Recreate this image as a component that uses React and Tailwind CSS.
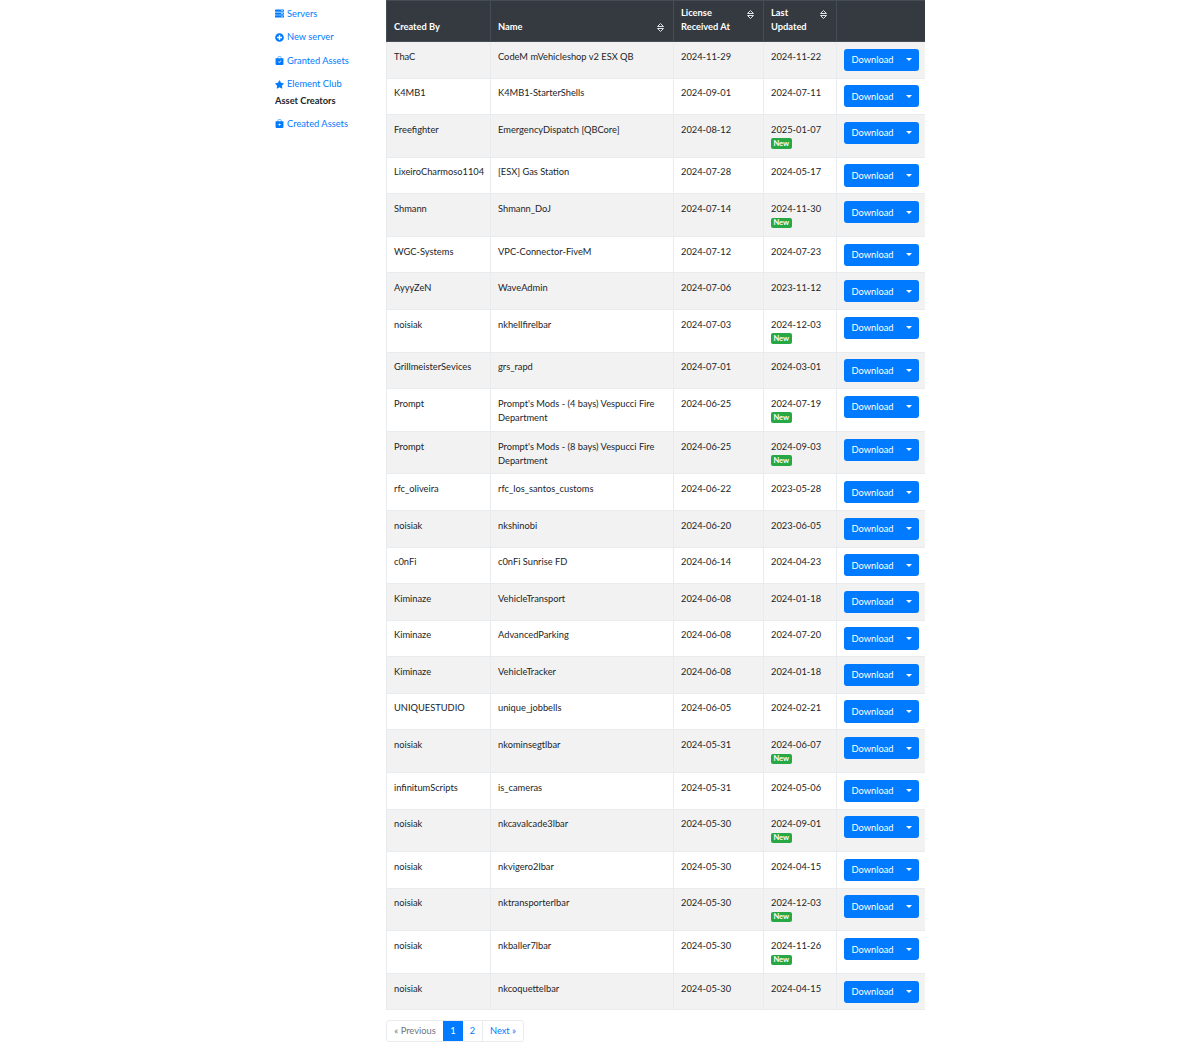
import React from 'react';
import { FaServer, FaPlusCircle, FaStar } from 'react-icons/fa';
import { BsBagCheckFill, BsBagPlusFill } from 'react-icons/bs';

const rows = [
    ['ThaC', 'CodeM mVehicleshop v2 ESX QB', '2024-11-29', '2024-11-22', false],
    ['K4MB1', 'K4MB1-StarterShells', '2024-09-01', '2024-07-11', false],
    ['Freefighter', 'EmergencyDispatch [QBCore]', '2024-08-12', '2025-01-07', true],
    ['LixeiroCharmoso1104', '[ESX] Gas Station', '2024-07-28', '2024-05-17', false],
    ['Shmann', 'Shmann_DoJ', '2024-07-14', '2024-11-30', true],
    ['WGC-Systems', 'VPC-Connector-FiveM', '2024-07-12', '2024-07-23', false],
    ['AyyyZeN', 'WaveAdmin', '2024-07-06', '2023-11-12', false],
    ['noisiak', 'nkhellfirelbar', '2024-07-03', '2024-12-03', true],
    ['GrillmeisterSevices', 'grs_rapd', '2024-07-01', '2024-03-01', false],
    ['Prompt', "Prompt's Mods - (4 bays) Vespucci Fire Department", '2024-06-25', '2024-07-19', true],
    ['Prompt', "Prompt's Mods - (8 bays) Vespucci Fire Department", '2024-06-25', '2024-09-03', true],
    ['rfc_oliveira', 'rfc_los_santos_customs', '2024-06-22', '2023-05-28', false],
    ['noisiak', 'nkshinobi', '2024-06-20', '2023-06-05', false],
    ['c0nFi', 'c0nFi Sunrise FD', '2024-06-14', '2024-04-23', false],
    ['Kiminaze', 'VehicleTransport', '2024-06-08', '2024-01-18', false],
    ['Kiminaze', 'AdvancedParking', '2024-06-08', '2024-07-20', false],
    ['Kiminaze', 'VehicleTracker', '2024-06-08', '2024-01-18', false],
    ['UNIQUESTUDIO', 'unique_jobbells', '2024-06-05', '2024-02-21', false],
    ['noisiak', 'nkominsegtlbar', '2024-05-31', '2024-06-07', true],
    ['infinitumScripts', 'is_cameras', '2024-05-31', '2024-05-06', false],
    ['noisiak', 'nkcavalcade3lbar', '2024-05-30', '2024-09-01', true],
    ['noisiak', 'nkvigero2lbar', '2024-05-30', '2024-04-15', false],
    ['noisiak', 'nktransporterlbar', '2024-05-30', '2024-12-03', true],
    ['noisiak', 'nkballer7lbar', '2024-05-30', '2024-11-26', true],
    ['noisiak', 'nkcoquettelbar', '2024-05-30', '2024-04-15', false],
];

const SortIcon = () => (
    <svg className="absolute right-[8px] top-[8px] w-[9px] h-[11px] text-[#dfe1e3]" viewBox="0 0 9 11" fill="none" stroke="currentColor" strokeWidth="1">
        <path d="M1.5 4.5 L4.5 1.5 L7.5 4.5 Z" />
        <path d="M1.5 6.5 L4.5 9.5 L7.5 6.5 Z" />
    </svg>
);

const SideLink = ({ icon, label, className }) => (
    <a href="#" className={`flex items-center gap-[3px] text-[#007bff] ${className}`}>
        <span className="w-[9px] flex justify-center text-[11px]">{icon}</span>
        <span>{label}</span>
    </a>
);

const App = () => {
    const cell = 'border border-[#e9ecef] px-[7px] pt-[7.7px] pb-[5.7px] align-top';
    const head = 'relative border border-[#454d55] px-[7px] pb-[7px] align-bottom font-bold';
    return (
        <div className="w-[650px] h-[1051px] overflow-hidden mx-auto flex text-[9.3px] leading-[14.1px] text-[#212529] font-['Lato',sans-serif]">
            <aside className="w-[111px] shrink-0 pt-[6.8px]">
                <SideLink icon={<FaServer />} label="Servers" />
                <SideLink icon={<FaPlusCircle />} label="New server" className="mt-[9.3px]" />
                <SideLink icon={<BsBagCheckFill />} label="Granted Assets" className="mt-[9.5px]" />
                <SideLink icon={<FaStar />} label="Element Club" className="mt-[9.5px]" />
                <p className="font-bold mt-[3px]">Asset Creators</p>
                <SideLink icon={<BsBagPlusFill />} label="Created Assets" className="mt-[8px]" />
            </aside>

            <main className="flex-1">
                <table className="w-[539px] table-fixed border-collapse">
                    <colgroup>
                        <col className="w-[104px]" />
                        <col className="w-[183px]" />
                        <col className="w-[90px]" />
                        <col className="w-[73px]" />
                        <col className="w-[89px]" />
                    </colgroup>
                    <thead className="bg-[#343a40] text-white text-left">
                        <tr className="h-[41px]">
                            <th className={head}>Created By</th>
                            <th className={head}>Name<span className="absolute right-0 top-[13px] w-[17px] h-[19px]"><SortIcon /></span></th>
                            <th className={head}>License<br />Received At<SortIcon /></th>
                            <th className={head}>Last<br />Updated<SortIcon /></th>
                            <th className="border border-[#454d55]"></th>
                        </tr>
                    </thead>
                    <tbody>
                        {rows.map((row, i) => (
                            <tr key={i} className="odd:bg-[#f2f2f2]">
                                <td className={cell}>{row[0]}</td>
                                <td className={cell}>{row[1]}</td>
                                <td className={cell}>{row[2]}</td>
                                <td className={cell}>
                                    {row[3]}
                                    {row[4] && (
                                        <div className="leading-none pt-[1.5px] h-[14.15px]">
                                            <span className="inline-block bg-[#28a745] text-white text-[7.5px] font-bold leading-none w-[20.5px] text-center py-[1.5px] rounded-[2px] align-top">New</span>
                                        </div>
                                    )}
                                </td>
                                <td className="border border-[#e9ecef] px-[7px] py-[6.7px] align-top">
                                    <div className="flex h-[22.2px] w-[75px] -ml-[0.5px] text-white bg-[#007bff] rounded-[3px]">
                                        <span className="w-[58px] flex items-center justify-center pt-[1px]">Download</span>
                                        <span className="flex-1 flex items-center justify-center pr-[2px]">
                                            <span className="w-0 h-0 border-x-[3.5px] border-x-transparent border-t-[3.5px] border-t-white"></span>
                                        </span>
                                    </div>
                                </td>
                            </tr>
                        ))}
                    </tbody>
                </table>

                <nav className="flex mt-[10px] h-[22px] w-[138px] border border-[#e9ecef] rounded-[3px] text-[#007bff]">
                    <span className="w-[56px] flex items-center justify-center text-[#6c757d]">« Previous</span>
                    <span className="w-[20px] flex items-center justify-center bg-[#007bff] text-white">1</span>
                    <span className="w-[20px] flex items-center justify-center border-r border-[#e9ecef]">2</span>
                    <span className="flex-1 flex items-center justify-center">Next »</span>
                </nav>
            </main>
        </div>
    );
};

export default App;
